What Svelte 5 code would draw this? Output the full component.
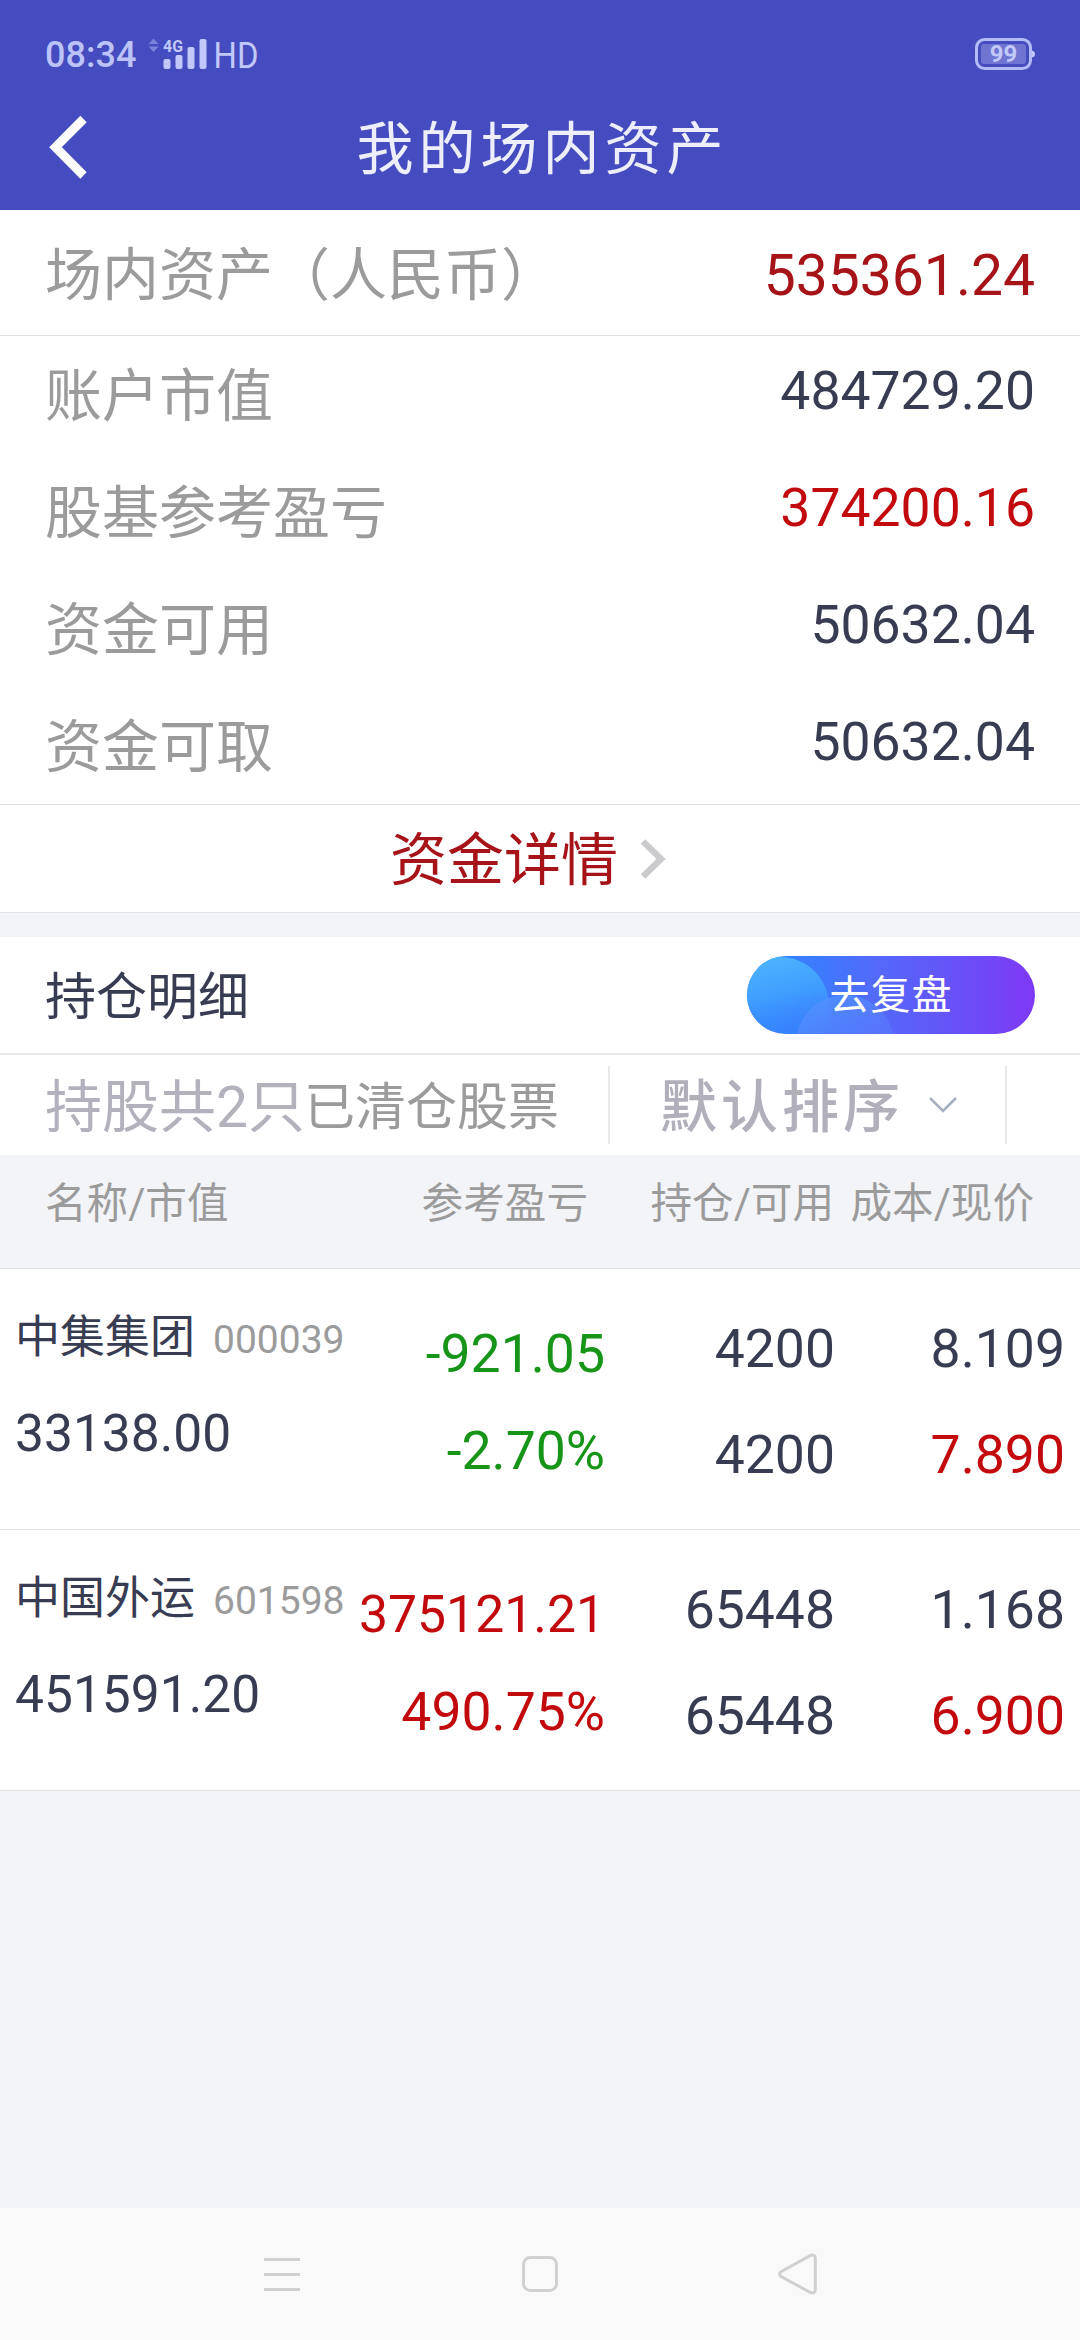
<script>
  const summary = [
    { label: '账户市值', value: '484729.20', tone: 'dark' },
    { label: '股基参考盈亏', value: '374200.16', tone: 'up' },
    { label: '资金可用', value: '50632.04', tone: 'dark' },
    { label: '资金可取', value: '50632.04', tone: 'dark' }
  ];
  const holdings = [
    {
      name: '中集集团', code: '000039', market: '33138.00',
      profit: '-921.05', rate: '-2.70%', tone: 'down',
      held: '4200', usable: '4200', cost: '8.109', price: '7.890'
    },
    {
      name: '中国外运', code: '601598', market: '451591.20',
      profit: '375121.21', rate: '490.75%', tone: 'up', long: true,
      held: '65448', usable: '65448', cost: '1.168', price: '6.900'
    }
  ];
</script>

<div class="screen">
  <header>
    <div class="status">
      <span class="time">08:34</span>
      <svg class="signal" width="130" height="60" viewBox="0 -14 130 60">
        <path class="faint" d="M0.500 7L5.500 1.500L10.500 7ZM0.500 9.500H10.500L5.500 15Z" />
        <text class="net" x="15" y="14.500" textLength="20" lengthAdjust="spacingAndGlyphs">4G</text>
        <rect x="15.500" y="22" width="7" height="10" rx="2" />
        <rect x="27.500" y="18" width="7" height="14" rx="2" />
        <rect x="39.500" y="10" width="7" height="22" rx="2" />
        <rect x="51.500" y="2" width="7" height="30" rx="2" />
        <text class="hd" x="65.500" y="30.500" textLength="45" lengthAdjust="spacingAndGlyphs">HD</text>
      </svg>
      <svg class="battery" width="61" height="34" viewBox="0 0 61 34">
        <rect class="shell" x="2.500" y="3.500" width="54" height="29" rx="8" />
        <rect class="charge" x="7" y="8" width="45" height="20" rx="3" />
        <path d="M58 14.500Q61 15 61 18T58 21.500Z" />
        <text x="29.500" y="26.200" text-anchor="middle">99</text>
      </svg>
    </div>
    <div class="titlebar">
      <svg class="back" width="40" height="66" viewBox="0 0 40 66">
        <path d="M35.500 5L7.500 33.200L35.500 61.500" />
      </svg>
      <h1>我的场内资产</h1>
    </div>
  </header>

  <section class="total">
    <span class="label">场内资产（人民币）</span>
    <span class="amount">535361.24</span>
  </section>

  <section class="summary">
    {#each summary as item}
      <div class="line">
        <span class="label">{item.label}</span>
        <span class="value {item.tone}">{item.value}</span>
      </div>
    {/each}
  </section>

  <div class="detail">
    <span>资金详情</span>
    <svg width="28" height="42" viewBox="0 0 28 42"><path d="M3 3.500L21 21L3 38.500" /></svg>
  </div>

  <section class="heading">
    <h2>持仓明细</h2>
    <div class="review">
      <svg width="288" height="78" viewBox="0 0 288 78">
        <defs>
          <linearGradient id="base" x1="0" y1="0" x2="1" y2="0">
            <stop offset="0" stop-color="#2f86ff" />
            <stop offset="0.250" stop-color="#3d7afc" />
            <stop offset="0.450" stop-color="#5369fa" />
            <stop offset="0.750" stop-color="#694ff8" />
            <stop offset="1" stop-color="#7f38f4" />
          </linearGradient>
          <linearGradient id="orb" x1="0.400" y1="0" x2="0.600" y2="0.900">
            <stop offset="0" stop-color="#4cb4ff" />
            <stop offset="0.450" stop-color="#3f9cff" />
            <stop offset="1" stop-color="#3784fd" stop-opacity="0" />
          </linearGradient>
          <linearGradient id="orb2" x1="0" y1="0" x2="0.300" y2="0.600">
            <stop offset="0" stop-color="#4d96ff" stop-opacity="0.900" />
            <stop offset="1" stop-color="#5b80fb" stop-opacity="0.500" />
          </linearGradient>
          <clipPath id="pill"><rect width="288" height="78" rx="39" /></clipPath>
        </defs>
        <g clip-path="url(#pill)">
          <rect width="288" height="78" fill="url(#base)" />
          <circle cx="33" cy="50" r="49" fill="url(#orb)" />
          <circle cx="98" cy="88" r="49" fill="url(#orb2)" />
        </g>
      </svg>
      <span>去复盘</span>
    </div>
  </section>

  <section class="filters">
    <span class="count">持股共2只</span>
    <span class="cleared">已清仓股票</span>
    <div class="sort">
      <span>默认排序</span>
      <svg width="30" height="18" viewBox="0 0 30 18"><path d="M2 2L15 15L28 2" /></svg>
    </div>
  </section>

  <div class="columns">
    <span>名称/市值</span>
    <span class="right">参考盈亏</span>
    <span class="right">持仓/可用</span>
    <span class="right">成本/现价</span>
  </div>

  {#each holdings as h}
    <article>
      <div class="stock">
        <div class="who"><span class="name">{h.name}</span><span class="code">{h.code}</span></div>
        <div class="market">{h.market}</div>
      </div>
      <div class="profit {h.tone}">
        <div class:long={h.long}>{h.profit}</div>
        <div>{h.rate}</div>
      </div>
      <div class="pair">
        <div>{h.held}</div>
        <div>{h.usable}</div>
      </div>
      <div class="pair">
        <div>{h.cost}</div>
        <div class="up">{h.price}</div>
      </div>
    </article>
  {/each}

  <div class="rest"></div>

  <nav>
    <svg width="44" height="44" viewBox="0 0 44 44"><path d="M4 6.500H40M4 21.500H40M4 36.500H40" /></svg>
    <svg width="44" height="44" viewBox="0 0 44 44"><rect x="5.500" y="4.500" width="33" height="33" rx="7" /></svg>
    <svg width="44" height="44" viewBox="0 0 44 44"><path d="M5 18.800L34.500 2.500Q39 1 39.300 5V37Q39 41 34.500 39.500L5 23.500Q2 21 5 18.800Z" /></svg>
  </nav>
</div>

<style>
  :global(body) {
    margin: 0;
    background: #f3f4f7;
  }
  .screen {
    display: flex;
    flex-direction: column;
    box-sizing: border-box;
    width: 1080px;
    height: 2340px;
    overflow: hidden;
    background: #f3f4f7;
    color: #383c52;
    font-family: Roboto, "Noto Sans CJK SC", sans-serif;
    white-space: nowrap;
  }
  svg {
    display: block;
    flex: none;
  }
  h1, h2 {
    margin: 0;
    font-weight: 400;
  }
  header {
    height: 210px;
    background: #444cbf;
  }
  .status {
    display: flex;
    height: 108px;
    padding: 0 45px;
    fill: #c1c8fa;
    color: #bcc3f8;
  }
  .time {
    width: 103px;
    font-size: 36px;
    font-weight: 500;
    line-height: 111px;
  }
  .signal {
    margin-top: 23px;
  }
  .faint {
    fill: #7b82dc;
  }
  .net {
    font-size: 17px;
    font-weight: 700;
  }
  .hd {
    font-size: 37px;
  }
  .battery {
    margin: 36px 0 0 auto;
  }
  .battery text {
    font-size: 24px;
    font-weight: 700;
  }
  .shell {
    fill: none;
    stroke: #b3bbf8;
    stroke-width: 3;
  }
  .charge {
    fill: #6e74d0;
  }
  .titlebar {
    display: grid;
    grid-template-columns: 1fr auto 1fr;
    align-items: center;
    height: 82px;
    padding: 0 43px 0 48px;
  }
  .back {
    fill: none;
    stroke: #fff;
    stroke-width: 9;
    margin-top: -6px;
  }
  h1 {
    font-size: 57px;
    line-height: 83px;
    letter-spacing: 5px;
    color: #eceefc;
  }
  .total {
    display: flex;
    justify-content: space-between;
    height: 125px;
    padding: 0 45px;
    border-bottom: 1px solid #e3e3e5;
    background: #fff;
    line-height: 131px;
  }
  .label {
    font-size: 57px;
    color: #9b9b9b;
  }
  .amount {
    font-size: 57px;
    color: #a61419;
  }
  .summary {
    padding: 0 45px;
    border-bottom: 1px solid #e3e3e5;
    background: #fff;
  }
  .line {
    display: flex;
    justify-content: space-between;
    height: 117px;
    line-height: 122px;
  }
  .value {
    font-size: 53.5px;
    line-height: 109px;
  }
  .dark {
    color: #383c52;
  }
  .up {
    color: #c20a0e;
  }
  .down {
    color: #179519;
  }
  .detail {
    display: flex;
    align-items: center;
    gap: 22px;
    height: 107px;
    padding-left: 390px;
    border-bottom: 1px solid #e3e3e5;
    background: #fff;
    color: #a61419;
    font-size: 57px;
  }
  .detail span {
    padding-top: 5px;
    line-height: 102px;
  }
  .detail svg {
    fill: none;
    stroke: #cbcbce;
    stroke-width: 6.5;
  }
  .heading {
    display: flex;
    align-items: center;
    justify-content: space-between;
    height: 116px;
    margin-top: 24px;
    padding: 0 45px;
    border-bottom: 2px solid #e9e9eb;
    background: #fff;
  }
  h2 {
    padding-top: 5px;
    font-size: 51px;
    line-height: 111px;
  }
  .review {
    display: grid;
    place-items: center;
  }
  .review svg,
  .review span {
    grid-area: 1 / 1;
  }
  .review span {
    z-index: 1;
    padding-top: 1px;
    color: #fff;
    font-size: 40px;
    letter-spacing: 1px;
    line-height: 77px;
  }
  .filters {
    display: flex;
    align-items: center;
    height: 100px;
    padding-left: 45px;
    background: #fff;
    line-height: 94px;
  }
  .filters span {
    padding-top: 5px;
  }
  .count {
    width: 259px;
    color: #b3b1bc;
    font-size: 57px;
  }
  .cleared {
    color: #9b9b9b;
    font-size: 51px;
    width: 304px;
  }
  .sort {
    display: flex;
    align-items: center;
    gap: 24px;
    box-sizing: border-box;
    width: 399px;
    height: 78px;
    padding-left: 50px;
    border: solid #e8e8ea;
    border-width: 0 2px;
    color: #b1afba;
    font-size: 57px;
    font-weight: 500;
    letter-spacing: 4px;
  }
  .sort svg {
    fill: none;
    stroke: #a6afbf;
    stroke-width: 2.5;
  }
  .columns {
    display: grid;
    grid-template-columns: 285px 258px 246px 200px;
    height: 113px;
    padding-left: 45px;
    border-bottom: 1px solid #e1e2e5;
    color: #9b9b9b;
    font-size: 41.6px;
    line-height: 98px;
  }
  .right {
    text-align: right;
  }
  article {
    display: grid;
    grid-template-columns: 335px 255px 230px 230px;
    height: 260px;
    padding-left: 15px;
    border-bottom: 1px solid #e3e3e5;
    background: #fff;
    font-size: 53.5px;
  }
  .stock {
    padding-top: 39px;
  }
  .who {
    display: flex;
    align-items: baseline;
    gap: 18px;
    line-height: 60px;
  }
  .name {
    font-size: 45px;
  }
  .code {
    color: #9b9b9b;
    font-size: 39px;
  }
  .market {
    padding-top: 33px;
    font-size: 51.5px;
    line-height: 62px;
  }
  .profit {
    padding-top: 36px;
    text-align: right;
    line-height: 97px;
  }
  .long {
    font-size: 51.7px;
  }
  .pair {
    padding-top: 27px;
    text-align: right;
    line-height: 106px;
  }
  .rest {
    flex: 1;
  }
  nav {
    display: flex;
    justify-content: center;
    gap: 214px;
    height: 80px;
    padding: 45px 0 7px;
    background: #f9f9f9;
    fill: none;
    stroke: #d0d0d0;
    stroke-width: 3;
  }
</style>
